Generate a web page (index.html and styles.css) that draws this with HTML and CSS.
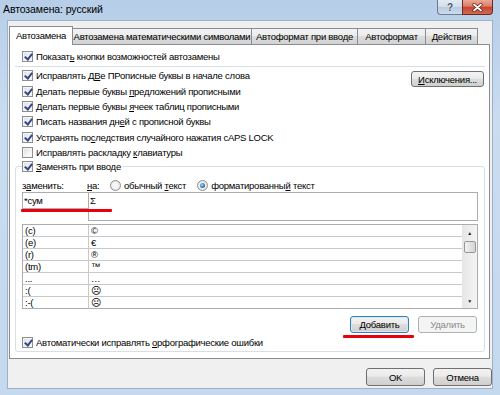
FILE: index.html
```html
<!DOCTYPE html>
<html lang="ru">
<head>
  <meta charset="UTF-8">
  <title>Автозамена: русский</title>
  <link rel="stylesheet" href="styles.css">
</head>
<body>
  <div class="window">
    <div class="titlebar">
      <span class="title">Автозамена: русский</span>
      <div class="caption-buttons">
        <span class="cap-btn help">?</span>
        <span class="cap-btn close">
          <svg width="11" height="9" viewBox="0 0 11 9"><path d="M2 1.5 L9 7.5 M9 1.5 L2 7.5" stroke="#5a1d14" stroke-width="3.2" stroke-linecap="round"/><path d="M2 1.5 L9 7.5 M9 1.5 L2 7.5" stroke="#fff" stroke-width="1.8" stroke-linecap="round"/></svg>
        </span>
      </div>
    </div>

    <div class="client">
      <div class="tabs">
        <div class="tab active t1">Автозамена</div>
        <div class="tab t2">Автозамена математическими символами</div>
        <div class="tab t3">Автоформат при вводе</div>
        <div class="tab t4">Автоформат</div>
        <div class="tab t5">Действия</div>
      </div>

      <div class="panel">
        <div class="check-row"><span class="cb on"></span><span>Показат<u>ь</u> кнопки возможностей автозамены</span></div>
        <div class="sep"></div>

        <div class="options">
          <div class="option-list">
            <div class="check-row"><span class="cb on"></span><span>Исправлять Д<u>В</u>е ПРописные буквы в начале слова</span></div>
            <div class="check-row"><span class="cb on"></span><span>Делать первые буквы <u>п</u>редложений прописными</span></div>
            <div class="check-row"><span class="cb on"></span><span>Делать первые буквы <u>я</u>чеек таблиц прописными</span></div>
            <div class="check-row"><span class="cb on"></span><span>Писать названия дн<u>е</u>й с прописной буквы</span></div>
            <div class="check-row"><span class="cb on"></span><span>Устранять по<u>с</u>ледствия случайного нажатия cAPS LOCK</span></div>
            <div class="check-row"><span class="cb"></span><span>Исправлять раскладку <u>к</u>лавиатуры</span></div>
          </div>
          <button class="btn exceptions"><u>И</u>сключения...</button>
        </div>

        <fieldset class="group">
          <legend class="check-row"><span class="cb on"></span><span><u>З</u>аменять при вводе</span></legend>

          <div class="replace-head">
            <span class="lbl-from">з<u>а</u>менить:</span>
            <span class="lbl-to"><u>н</u>а:</span>
            <span class="radio"></span>
            <span class="radio-text">обычный <u>т</u>екст</span>
            <span class="radio-pick">
              <span class="radio on"></span>
              <span class="radio-text">форматированны<u>й</u> текст</span>
              <span class="mark mark-format"></span>
            </span>
          </div>

          <div class="inputs">
            <div class="field from">*сум</div>
            <div class="field to">Σ</div>
            <span class="mark mark-from"></span>
          </div>

          <div class="list">
            <div class="rows">
              <div class="row"><span class="cell key">(c)</span><span class="cell">©</span></div>
              <div class="row"><span class="cell key">(e)</span><span class="cell">€</span></div>
              <div class="row"><span class="cell key">(r)</span><span class="cell">®</span></div>
              <div class="row"><span class="cell key">(tm)</span><span class="cell">™</span></div>
              <div class="row"><span class="cell key">...</span><span class="cell">…</span></div>
              <div class="row"><span class="cell key">:(</span><span class="cell">☹</span></div>
              <div class="row"><span class="cell key">:-(</span><span class="cell">☹</span></div>
            </div>
            <div class="scrollbar">
              <span class="arrow">▲</span>
              <span class="thumb"></span>
              <span class="track"></span>
              <span class="arrow">▼</span>
            </div>
          </div>

          <div class="list-buttons">
            <span class="btn-wrap">
              <button class="btn default"><u>Д</u>обавить</button>
              <span class="mark mark-add"></span>
            </span>
            <button class="btn" disabled>Удалить</button>
          </div>

          <div class="check-row flush"><span class="cb on"></span><span>Автоматически исправлять <u>о</u>рфографические ошибки</span></div>
        </fieldset>
      </div>

      <div class="dialog-buttons">
        <button class="btn">OK</button>
        <button class="btn">Отмена</button>
      </div>
    </div>
  </div>
</body>
</html>
```

FILE: styles.css
```css
* {
  box-sizing: border-box;
}

body {
  margin: 0;
  font-family: "Liberation Sans", Arial, sans-serif;
  font-size: 9.5px;
  letter-spacing: -0.25px;
  color: #000;
}

u {
  text-decoration-thickness: 1px;
  text-underline-offset: 1px;
}

.window {
  width: 500px;
  height: 395px;
  display: flex;
  flex-direction: column;
  background: linear-gradient(#b7cee8, #c9dcf0 30%, #c4d8ee);
}

/* заголовок окна */
.titlebar {
  height: 20px;
  display: flex;
  justify-content: space-between;
  align-items: flex-start;
  padding: 0 7px 0 3px;
}

.title {
  font-size: 10.5px;
  letter-spacing: -0.1px;
  padding-top: 3px;
}

.caption-buttons {
  display: flex;
}

.cap-btn {
  height: 15px;
  display: flex;
  align-items: center;
  justify-content: center;
  border: 1px solid #6c7c91;
  border-top: none;
}

.cap-btn.help {
  width: 25px;
  border-radius: 0 0 0 4px;
  border-right: none;
  background: linear-gradient(#e3ebf4, #cfdcea 50%, #b8cadf 50%, #cddcec);
  color: #4a5566;
  font-weight: bold;
  font-size: 10px;
  text-shadow: 0 0 2px #fff;
}

.cap-btn.close {
  width: 31px;
  border-color: #6b2b22;
  border-radius: 0 0 4px 0;
  background: linear-gradient(#e9a997, #dc7d66 45%, #c7432c 50%, #d26a52);
}

/* клиентская часть */
.client {
  flex: 1;
  margin: 0 7px 6px;
  background: #f0f0f0;
  border: 1px solid #9fb1c6;
  padding: 5px 2px 2px 1px;
  display: flex;
  flex-direction: column;
}

.tabs {
  height: 18px;
  display: flex;
  align-items: flex-end;
}

.tab {
  height: 16px;
  border: 1px solid #898c95;
  border-bottom: none;
  margin-right: -1px;
  background: linear-gradient(#f3f3f3, #ebebeb 50%, #dddddd 50%, #d2d2d2);
  text-align: center;
  line-height: 15px;
  white-space: nowrap;
}

.tab.active {
  height: 19px;
  margin-bottom: -1px;
  background: #fff;
  position: relative;
  z-index: 1;
  line-height: 17px;
}

.t1 { width: 64px; }
.t2 { width: 180px; }
.t3 { width: 107px; }
.t4 { width: 69px; }
.t5 { width: 53px; }

.panel {
  height: 315px;
  background: #fff;
  border: 1px solid #898c95;
  padding: 4px 4px 0 5px;
}

.check-row {
  display: flex;
  align-items: center;
  height: 15px;
  padding-left: 7px;
  white-space: nowrap;
}

.cb {
  width: 11px;
  height: 11px;
  flex: none;
  margin-right: 3px;
  position: relative;
  border: 1px solid #8e8f8f;
  background: linear-gradient(135deg, #d9dcdf, #f8f8f8 70%);
  box-shadow: inset 0 0 0 1px #f4f4f4;
}

.cb.on::after {
  content: "";
  position: absolute;
  left: 3px;
  top: 0;
  width: 3px;
  height: 6px;
  border: solid #33478c;
  border-width: 0 2px 2px 0;
  transform: rotate(38deg);
}

.sep {
  height: 1px;
  background: #d5dfe5;
  margin: 2px 0 1px;
}

.options {
  display: flex;
  justify-content: space-between;
  margin-bottom: -1px;
}

.option-list .check-row {
  height: 15.4px;
}

.btn {
  font: inherit;
  letter-spacing: inherit;
  color: #000;
  height: 17px;
  width: 59px;
  padding: 0;
  border: 1px solid #707070;
  border-radius: 3px;
  background: linear-gradient(#f2f2f2, #ebebeb 45%, #dddddd 50%, #cfcfcf);
}

.btn.default {
  border-color: #3c7fb1;
  box-shadow: inset 0 0 0 1px #cfeafa;
}

.btn:disabled {
  border-color: #adb2b5;
  background: #f4f4f4;
  color: #8a8a8a;
}

.btn.exceptions {
  width: 73px;
  height: 16px;
  margin: 3px 1px 0 0;
}

/* группа "Заменять при вводе" */
.group {
  margin: 0;
  border: 1px solid #d5dfe5;
  border-radius: 3px;
  padding: 0 6px 1px 6px;
  min-width: 0;
}

.group legend {
  padding: 0 2px 0 0;
  margin: 0;
}

.check-row.flush {
  padding-left: 0;
  margin-top: 2px;
}

.replace-head {
  height: 14px;
  margin-top: 4px;
  display: flex;
  align-items: center;
  white-space: nowrap;
}

.lbl-from {
  width: 65px;
}

.lbl-to {
  width: 23px;
}

.radio {
  width: 11px;
  height: 11px;
  flex: none;
  margin-right: 3px;
  border-radius: 50%;
  border: 1px solid #8e8f8f;
  background: radial-gradient(#f6f6f6 40%, #d4d4d4);
  position: relative;
}

.radio.on::after {
  content: "";
  position: absolute;
  left: 2px;
  top: 2px;
  width: 5px;
  height: 5px;
  border-radius: 50%;
  background: radial-gradient(circle at 40% 40%, #9fdcff, #1b63a8 70%);
}

.radio-pick {
  display: flex;
  align-items: center;
  position: relative;
  margin-left: 11px;
}

.mark {
  position: absolute;
  height: 3px;
  border-radius: 1px;
  background: #e8000b;
}

.mark-format {
  left: -4px;
  right: -6px;
  bottom: -6px;
}

.inputs {
  display: flex;
  align-items: flex-start;
  height: 29px;
  position: relative;
}

.field {
  border: 1px solid #abadb3;
  padding: 2px 1px 0;
  background: #fff;
}

.field.from {
  width: 67px;
  height: 17px;
  border-right-color: #c5c7cc;
}

.field.to {
  flex: 1;
  height: 29px;
  margin-left: -1px;
}

.mark-from {
  left: -1px;
  width: 91px;
  top: 17px;
}

/* список замен */
.list {
  height: 85px;
  margin-top: 3px;
  display: flex;
  border: 1px solid #abadb3;
}

.rows {
  flex: 1;
  overflow: hidden;
}

.row {
  height: 12px;
  display: flex;
  border-bottom: 1px solid #c9c9c9;
  line-height: 11px;
}

.cell {
  padding-left: 2px;
}

.cell.key {
  width: 66px;
  border-right: 1px solid #c9c9c9;
}

.scrollbar {
  width: 15px;
  display: flex;
  flex-direction: column;
  background: linear-gradient(90deg, #e6e6e6, #f4f4f4);
}

.arrow {
  height: 15px;
  font-size: 5px;
  color: #222;
  display: flex;
  align-items: center;
  justify-content: center;
}

.thumb {
  height: 12px;
  margin: 1px 1px 0 2px;
  border: 1px solid #979797;
  border-radius: 2px;
  background: linear-gradient(90deg, #f3f3f3, #e2e2e2 50%, #d5d5d5);
}

.track {
  flex: 1;
}

.list-buttons {
  display: flex;
  justify-content: flex-end;
  gap: 9px;
  margin: 7px 1px 0 0;
}

.btn-wrap {
  position: relative;
  display: flex;
}

.mark-add {
  left: -7px;
  width: 71px;
  top: 19px;
}

.dialog-buttons {
  margin-top: auto;
  margin-right: -2px;
  display: flex;
  justify-content: flex-end;
  gap: 8px;
}

.dialog-buttons .btn {
  height: 18px;
}
```
